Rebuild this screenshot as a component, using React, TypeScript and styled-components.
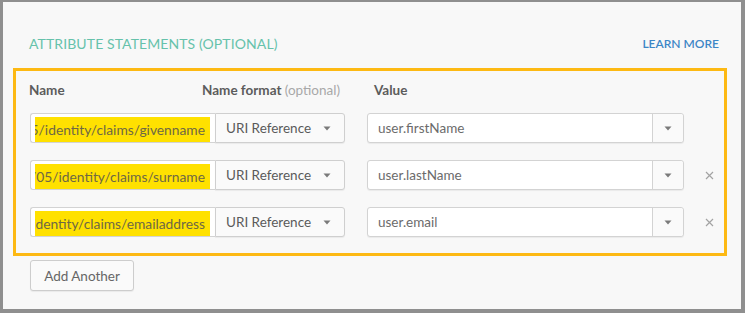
import React from "react";
import styled, { createGlobalStyle } from "styled-components";

const GlobalStyle = createGlobalStyle`
  html, body {
    margin: 0;
    padding: 0;
  }
  body {
    font-family: Lato, "Open Sans", "Liberation Sans", sans-serif;
    background: #8f8f8f;
  }
`;

type Attr = {
  name: string;
  value: string;
  removable: boolean;
};

const attributes: Attr[] = [
  { name: "http://schemas.xmlsoap.org/ws/2005/05/identity/claims/givenname", value: "user.firstName", removable: false },
  { name: "http://schemas.xmlsoap.org/ws/2005/05/identity/claims/surname", value: "user.lastName", removable: true },
  { name: "http://schemas.xmlsoap.org/ws/2005/05/identity/claims/emailaddress", value: "user.email", removable: true },
];

const Arrow = () => (
  <svg width="8" height="5" viewBox="0 0 8 5">
    <path d="M0.5 0.5 L7.5 0.5 L4 4.5 Z" fill="#7a7a7a" />
  </svg>
);

const Cross = () => (
  <svg width="9" height="9" viewBox="0 0 9 9">
    <path d="M1 1 L8 8 M8 1 L1 8" stroke="#a3a3a3" strokeWidth="1.2" />
  </svg>
);

export default function App() {
  return (
    <>
      <GlobalStyle />
      <Frame>
        <TitleBar>
          <Title>ATTRIBUTE STATEMENTS (OPTIONAL)</Title>
          <LearnMore>LEARN MORE</LearnMore>
        </TitleBar>

        <Highlighted>
          <Headers>
            <HeaderCell $width={173}>Name</HeaderCell>
            <HeaderCell $width={172}>
              Name format <Optional>(optional)</Optional>
            </HeaderCell>
            <HeaderCell>Value</HeaderCell>
          </Headers>

          {attributes.map((a) => (
            <Row key={a.name}>
              <NameInput>
                <Selection>
                  <span>{a.name}</span>
                </Selection>
              </NameInput>
              <FormatSelect>
                <span>URI Reference</span>
                <Arrow />
              </FormatSelect>
              <ValueCombo>
                <ValueText>{a.value}</ValueText>
                <ComboToggle>
                  <Arrow />
                </ComboToggle>
              </ValueCombo>
              <Remove>{a.removable && <Cross />}</Remove>
            </Row>
          ))}
        </Highlighted>

        <AddButton>Add Another</AddButton>
      </Frame>
    </>
  );
}

const Frame = styled.div`
  box-sizing: border-box;
  width: 745px;
  height: 313px;
  border-style: solid;
  border-color: #8f8f8f;
  border-width: 2px 4px 4px 3px;
  background: #f8f8f8;
  padding-top: 31px;
`;

const TitleBar = styled.div`
  display: flex;
  justify-content: space-between;
  align-items: center;
  height: 20px;
  padding: 0 22px 0 26px;
`;

const Title = styled.div`
  color: #66c2ab;
  font-size: 14px;
  letter-spacing: 0.1px;
`;

const LearnMore = styled.a`
  color: #3d86c6;
  font-size: 12px;
  font-weight: 600;
`;

const Highlighted = styled.div`
  margin: 15px 14px 0 10px;
  border: 3px solid #fdb913;
  padding: 9px 0 16px 13px;
`;

const Headers = styled.div`
  display: flex;
  align-items: center;
  height: 20px;
  margin-bottom: 13px;
`;

const HeaderCell = styled.div<{ $width?: number }>`
  width: ${(p) => (p.$width ? `${p.$width}px` : "auto")};
  font-size: 13.5px;
  font-weight: 700;
  color: #5c5c5c;
`;

const Optional = styled.span`
  font-weight: 400;
  color: #a8a8a8;
`;

const Row = styled.div`
  display: flex;
  align-items: center;
  height: 30px;
  padding-left: 1px;
  & + & {
    margin-top: 17px;
  }
`;

const NameInput = styled.div`
  box-sizing: border-box;
  width: 185px;
  height: 30px;
  padding: 3px 5px 0 4px;
  background: #fff;
  border: 1px solid #d3d3d3;
  border-right: none;
  border-radius: 3px 0 0 3px;
  display: flex;
`;

const Selection = styled.div`
  flex: 1;
  display: flex;
  justify-content: flex-end;
  align-items: center;
  overflow: hidden;
  white-space: nowrap;
  background: #ffe100;
  color: #6e6845;
  font-size: 13.8px;
  padding-right: 5px;
`;

const FormatSelect = styled.div`
  box-sizing: border-box;
  width: 130px;
  height: 30px;
  display: flex;
  align-items: center;
  justify-content: space-between;
  padding: 0 13px 0 10px;
  background: #fafafa;
  border: 1px solid #cfcfcf;
  border-radius: 0 3px 3px 0;
  box-shadow: 0 1px 1px rgba(0, 0, 0, 0.06);
  color: #5a5a5a;
  font-size: 13.5px;
`;

const ValueCombo = styled.div`
  box-sizing: border-box;
  margin-left: 22px;
  width: 317px;
  height: 30px;
  display: flex;
  background: #fff;
  border: 1px solid #d3d3d3;
  border-radius: 3px;
  box-shadow: 0 1px 1px rgba(0, 0, 0, 0.06);
`;

const ValueText = styled.div`
  flex: 1;
  display: flex;
  align-items: center;
  padding-left: 10px;
  color: #6b6b6b;
  font-size: 13.5px;
`;

const ComboToggle = styled.div`
  width: 30px;
  display: flex;
  align-items: center;
  justify-content: center;
  background: #fafafa;
  border-left: 1px solid #d3d3d3;
  border-radius: 0 3px 3px 0;
`;

const Remove = styled.div`
  width: 9px;
  height: 9px;
  margin-left: 21px;
  display: flex;
`;

const AddButton = styled.button`
  margin: 4px 0 0 27px;
  width: 104px;
  height: 31px;
  background: #fafafa;
  border: 1px solid #cdcdcd;
  border-radius: 3px;
  box-shadow: 0 1px 1px rgba(0, 0, 0, 0.06);
  color: #666;
  font-family: inherit;
  font-size: 13.5px;
  padding: 0;
`;
